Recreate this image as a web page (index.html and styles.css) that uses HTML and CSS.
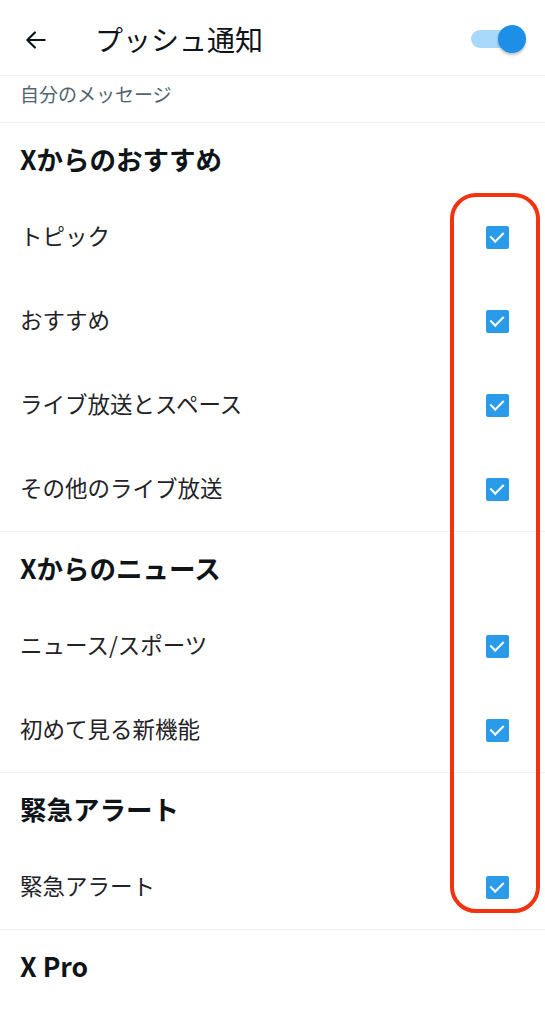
FILE: index.html
```html
<!DOCTYPE html>
<html lang="ja">
<head>
    <meta charset="UTF-8">
    <meta name="viewport" content="width=device-width, initial-scale=1.0">
    <title>プッシュ通知</title>
    <link rel="stylesheet" href="styles.css">
</head>
<body>
    <div class="screen">
        <div class="topbar">
            <svg class="back" viewBox="0 0 24 24" width="26" height="26">
                <path d="M20 12H5M11 5l-7 7 7 7" fill="none" stroke="#0f1419" stroke-width="2" stroke-linecap="round" stroke-linejoin="round"/>
            </svg>
            <h1>プッシュ通知</h1>
            <div class="toggle"><span class="knob"></span></div>
        </div>

        <div class="sublabel">自分のメッセージ</div>

        <div class="section">
            <h2>Xからのおすすめ</h2>
            <div class="row"><span class="label">トピック</span><span class="check"></span></div>
            <div class="row"><span class="label">おすすめ</span><span class="check"></span></div>
            <div class="row"><span class="label">ライブ放送とスペース</span><span class="check"></span></div>
            <div class="row"><span class="label">その他のライブ放送</span><span class="check"></span></div>
        </div>

        <div class="section">
            <h2>Xからのニュース</h2>
            <div class="row"><span class="label">ニュース/スポーツ</span><span class="check"></span></div>
            <div class="row"><span class="label">初めて見る新機能</span><span class="check"></span></div>
        </div>

        <div class="section">
            <h2>緊急アラート</h2>
            <div class="row"><span class="label">緊急アラート</span><span class="check"></span></div>
        </div>

        <div class="section last">
            <h2>X Pro</h2>
        </div>

        <div class="highlight"></div>
    </div>
</body>
</html>
```

FILE: styles.css
```css
* {
    margin: 0;
    padding: 0;
    box-sizing: border-box;
}

body {
    font-family: "Noto Sans CJK JP", "Noto Sans", sans-serif;
    background: white;
    color: #0f1419;
}

.screen {
    position: relative;
    width: 545px;
    min-height: 1024px;
}

.topbar {
    height: 76px;
    display: flex;
    align-items: center;
    padding: 4px 22px 0 23px;
    border-bottom: 1px solid #eff3f4;
}

.topbar h1 {
    font-size: 28px;
    font-weight: 400;
    margin-left: 46px;
    margin-top: -2px;
    flex: 1;
}

.toggle {
    position: relative;
    width: 52px;
    height: 18px;
    border-radius: 9px;
    background: #a8d8fa;
    margin-top: -2px;
}

.toggle .knob {
    position: absolute;
    right: -3px;
    top: -5px;
    width: 28px;
    height: 28px;
    border-radius: 50%;
    background: #1d8fe6;
    box-shadow: 0 2px 3px rgba(0,0,0,0.25);
}

.sublabel {
    height: 47px;
    padding: 0 20px 11px;
    display: flex;
    align-items: center;
    font-size: 19px;
    color: #536471;
    border-bottom: 1px solid #eff3f4;
}

.section {
    border-bottom: 1px solid #eff3f4;
}

.section.last {
    border-bottom: none;
}

.section h2 {
    height: 72px;
    padding: 0 20px 2px;
    display: flex;
    align-items: center;
    font-size: 26.5px;
    font-weight: 700;
}

.row {
    height: 84px;
    padding: 0 36px 0 20px;
    display: flex;
    align-items: center;
    justify-content: space-between;
    font-size: 22.5px;
    color: #1f2328;
}

.row .label {
    margin-top: -4px;
}

.check {
    position: relative;
    width: 23px;
    height: 23px;
    border-radius: 2px;
    background: #2a9be9;
}

.check::after {
    content: "";
    position: absolute;
    left: 7px;
    top: 3px;
    width: 6px;
    height: 11px;
    border: solid white;
    border-width: 0 2.5px 2.5px 0;
    transform: rotate(45deg);
}

.highlight {
    position: absolute;
    left: 450px;
    top: 193px;
    width: 90px;
    height: 720px;
    border: 4px solid #f2330f;
    border-radius: 26px;
}
```
